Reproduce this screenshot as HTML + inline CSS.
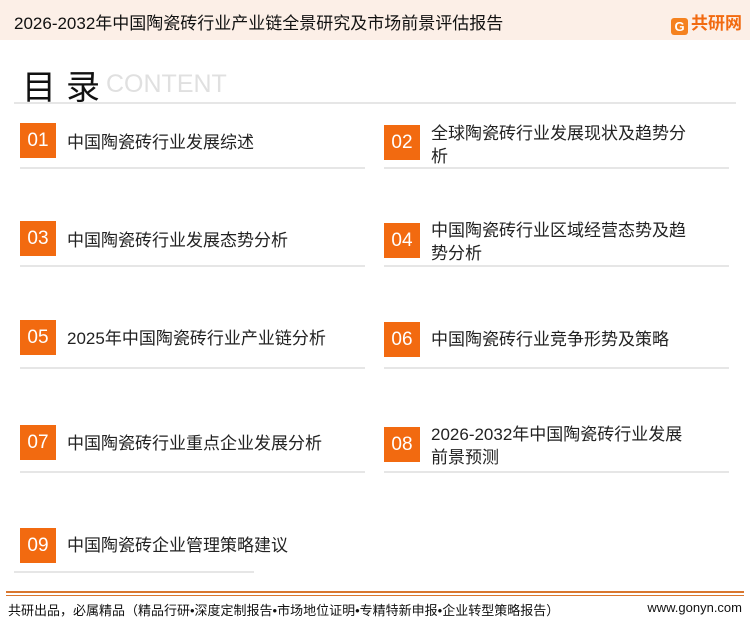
<!DOCTYPE html>
<html><head><meta charset="utf-8"><style>
*{margin:0;padding:0;box-sizing:border-box}
body{width:750px;height:622px;background:#fff;position:relative;overflow:hidden;font-family:"Liberation Sans","Noto Sans CJK SC",sans-serif;color:#222}
.hd{position:absolute;left:0;top:0;width:750px;height:40px;background:#fcefe7}
.hd .t{position:absolute;left:14px;top:9px;font-size:17px;color:#111}
.logo{position:absolute;right:8px;top:9px;font-size:17px;font-weight:bold;color:#f26a10}
.logo span{display:inline-block;width:17px;height:17px;background:#f5821f;border-radius:3px;vertical-align:-2px;margin-right:3px;color:#fff;font-size:13px;text-align:center;line-height:17px}
.ml{position:absolute;left:22px;top:60px;font-size:34px;color:#111;letter-spacing:10px}
.ct{position:absolute;left:106px;top:70px;font-size:25px;color:#e0e0e0}
.hr{position:absolute;left:14px;top:102px;width:722px;height:2px;background:#e6e6e6}
.b{position:absolute;width:36px;height:35px;background:#f26a10;color:#fff;font-size:19px;text-align:center;line-height:35px}
.tx{position:absolute;font-size:17px;line-height:23px;color:#222}
.w{width:262px}
.u{position:absolute;height:2px;background:#e6e6e6;width:345px}
.f1{position:absolute;left:6px;top:591px;width:738px;height:2px;background:#d9772f}
.f2{position:absolute;left:6px;top:595px;width:738px;height:1px;background:#d9772f}
.ft{position:absolute;left:8px;top:600px;font-size:13px;color:#111}
.fr{position:absolute;right:8px;top:600px;font-size:13px;color:#111}
</style></head><body>
<div class="hd"><div class="t">2026-2032年中国陶瓷砖行业产业链全景研究及市场前景评估报告</div><div class="logo"><span>G</span>共研网</div></div>
<div class="ml">目录</div><div class="ct">CONTENT</div>
<div class="hr"></div>

<div class="b" style="left:20px;top:123px">01</div><div class="tx" style="left:67px;top:131px">中国陶瓷砖行业发展综述</div>
<div class="u" style="left:20px;top:167px"></div>
<div class="b" style="left:384px;top:125px">02</div><div class="tx w" style="left:431px;top:122px">全球陶瓷砖行业发展现状及趋势分析</div>
<div class="u" style="left:384px;top:167px"></div>

<div class="b" style="left:20px;top:221px">03</div><div class="tx" style="left:67px;top:229px">中国陶瓷砖行业发展态势分析</div>
<div class="u" style="left:20px;top:265px"></div>
<div class="b" style="left:384px;top:223px">04</div><div class="tx w" style="left:431px;top:219px">中国陶瓷砖行业区域经营态势及趋势分析</div>
<div class="u" style="left:384px;top:265px"></div>

<div class="b" style="left:20px;top:320px">05</div><div class="tx" style="left:67px;top:327px">2025年中国陶瓷砖行业产业链分析</div>
<div class="u" style="left:20px;top:367px"></div>
<div class="b" style="left:384px;top:322px">06</div><div class="tx" style="left:431px;top:328px">中国陶瓷砖行业竞争形势及策略</div>
<div class="u" style="left:384px;top:367px"></div>

<div class="b" style="left:20px;top:425px">07</div><div class="tx" style="left:67px;top:432px">中国陶瓷砖行业重点企业发展分析</div>
<div class="u" style="left:20px;top:471px"></div>
<div class="b" style="left:384px;top:427px">08</div><div class="tx w" style="left:431px;top:423px">2026-2032年中国陶瓷砖行业发展前景预测</div>
<div class="u" style="left:384px;top:471px"></div>

<div class="b" style="left:20px;top:528px">09</div><div class="tx" style="left:67px;top:534px">中国陶瓷砖企业管理策略建议</div>
<div class="u" style="left:14px;top:571px;width:240px"></div>

<div class="f1"></div><div class="f2"></div>
<div class="ft">共研出品，必属精品（精品行研•深度定制报告•市场地位证明•专精特新申报•企业转型策略报告）</div>
<div class="fr">www.gonyn.com</div>
</body></html>
